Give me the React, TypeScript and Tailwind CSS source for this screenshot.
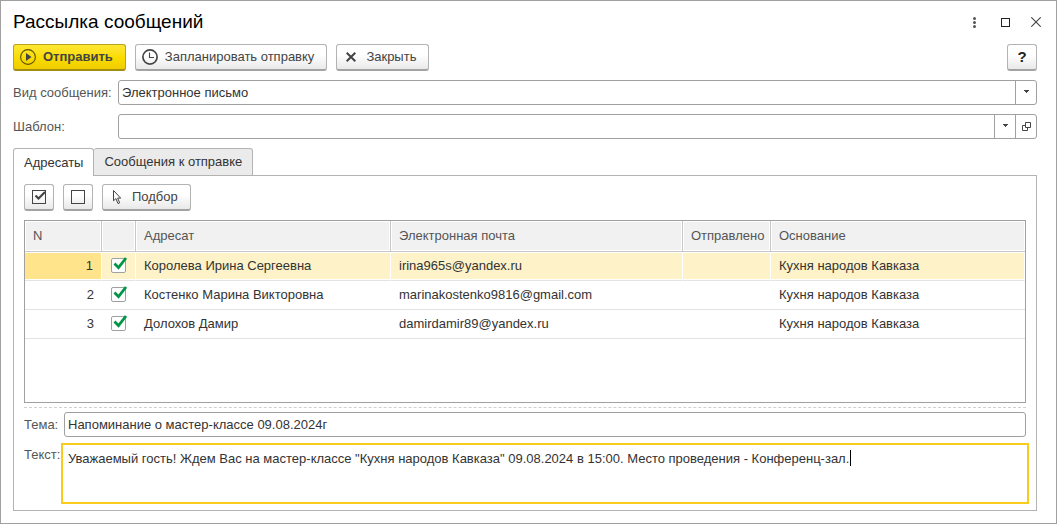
import { useLayoutEffect, useRef, useState } from "react";
import type { ReactNode } from "react";

const recipients = [
  { id: 1, name: "Королева Ирина Сергеевна", email: "irina965s@yandex.ru", reason: "Кухня народов Кавказа" },
  { id: 2, name: "Костенко Марина Викторовна", email: "marinakostenko9816@gmail.com", reason: "Кухня народов Кавказа" },
  { id: 3, name: "Долохов Дамир", email: "damirdamir89@yandex.ru", reason: "Кухня народов Кавказа" },
];

const columns = ["N", "", "Адресат", "Электронная почта", "Отправлено", "Основание"];

const buttonBase =
  "flex h-[27px] items-center rounded-[3px] border border-b-2 border-[#b3b3b3] border-b-[#a3a3a3] bg-linear-to-b from-white from-40% to-[#e9e9e9] text-[#444]";

function ToolButton({ children, label, className }: { children: ReactNode; label?: string; className: string }) {
  return (
    <button type="button" aria-label={label} className={`${buttonBase} ${className}`}>
      {children}
    </button>
  );
}

function PlayIcon() {
  return (
    <svg width="16" height="16" viewBox="0 0 16 16" fill="none">
      <circle cx="8" cy="8" r="7.4" stroke="#5a5000" strokeWidth="1.1" />
      <path d="M6 4v8L11.5 8z" fill="#444" />
    </svg>
  );
}

function ClockIcon() {
  return (
    <svg width="16" height="16" viewBox="0 0 16 16" fill="none" stroke="#444">
      <circle cx="8" cy="8" r="7.1" strokeWidth="1.7" />
      <path d="M7.5 3.5v5H12" strokeWidth="1.1" />
    </svg>
  );
}

function CrossIcon() {
  return (
    <svg width="10" height="10" viewBox="0 0 10 10" stroke="#444" strokeWidth="2">
      <path d="M.7.7l8.6 8.6M9.3.7L.7 9.3" />
    </svg>
  );
}

function CheckAllIcon() {
  return (
    <svg width="16" height="14" viewBox="0 0 16 14" fill="none">
      <rect x="1.5" y=".5" width="13" height="13" stroke="#444" />
      <path d="M4.5 5.5l3 3 6.5-6.5" stroke="#444" strokeWidth="2.2" />
    </svg>
  );
}

function UncheckAllIcon() {
  return (
    <svg width="14" height="14" viewBox="0 0 14 14" fill="none">
      <rect x=".5" y=".5" width="13" height="13" stroke="#444" />
    </svg>
  );
}

function CursorIcon() {
  return (
    <svg width="10" height="16" viewBox="0 0 10 16" fill="none" stroke="#444">
      <path d="M1.5 1.5v10.3l2.4-2.2 2.1 5 1.7-.8-2.1-4.7h3.1z" strokeWidth="1" />
    </svg>
  );
}

function ArrowDown() {
  return (
    <svg width="5" height="3" viewBox="0 0 5 3">
      <path d="M0 0h5v1H4v1H3v1H2V2H1V1H0z" fill="#444" />
    </svg>
  );
}

function OpenIcon() {
  return (
    <svg width="9" height="9" viewBox="0 0 9 9" fill="none" stroke="#444">
      <path d="M3.5.5h5v5h-5zM3.5 3.5h-3v5h5v-3" />
    </svg>
  );
}

function SelectBox({ id, options }: { id: string; options: string[] }) {
  return (
    <div className="relative min-w-0 flex-1">
      <select id={id} className="block h-full w-full appearance-none bg-transparent pr-6 pl-[3px] text-[#333] outline-none">
        {options.map((option) => (
          <option key={option}>{option}</option>
        ))}
      </select>
      <span className="pointer-events-none absolute inset-y-0 right-0 flex w-[21px] items-center justify-center border-l border-[#a0a0a0] pb-[2px]">
        <ArrowDown />
      </span>
    </div>
  );
}

function RowCheck({ label }: { label: string }) {
  return (
    <span className="relative mb-[2px] ml-[9px] block size-[15px]">
      <input
        type="checkbox"
        defaultChecked
        aria-label={label}
        className="peer block size-[15px] appearance-none rounded-[2px] border border-[#a0a0a0] bg-white"
      />
      <svg
        className="pointer-events-none invisible absolute -top-px left-[2px] peer-checked:visible"
        width="15"
        height="14"
        viewBox="0 0 15 14"
        fill="none"
      >
        <path d="M1.5 6.5l4 4.2L13 1" stroke="#009646" strokeWidth="2.8" />
      </svg>
    </span>
  );
}

function MessageBox({ id }: { id: string }) {
  const [text, setText] = useState(
    'Уважаемый гость! Ждем Вас на мастер-классе "Кухня народов Кавказа" 09.08.2024 в 15:00. Место проведения - Конференц-зал.'
  );
  const area = useRef<HTMLTextAreaElement>(null);
  const [caret, setCaret] = useState(0);

  useLayoutEffect(() => {
    const context = document.createElement("canvas").getContext("2d");
    if (!area.current || !context) return;
    const style = getComputedStyle(area.current);
    context.font = `${style.fontSize} ${style.fontFamily}`;
    setCaret(Math.ceil(context.measureText(text).width) + 5);
  }, [text]);

  return (
    <div className="relative -mr-[3px] -ml-[3px] min-w-0 flex-1 border-2 border-[#f8cb1c] bg-white">
      <textarea
        id={id}
        ref={area}
        value={text}
        onChange={(event) => setText(event.target.value)}
        className="block h-[57px] w-full resize-none px-[5px] py-[6px] leading-4 text-[#333] caret-transparent outline-none"
      />
      <span className="pointer-events-none absolute top-[5px] h-4 w-px bg-black" style={{ left: caret }} />
    </div>
  );
}

export default function App() {
  return (
    <div className="flex min-h-screen flex-col border border-[#a0a0a0] bg-white px-3 pb-3 font-['Liberation_Sans',Arial,sans-serif] text-[13px] leading-4 text-[#333]">
      <header className="flex h-[42px] items-center justify-between pr-[7px]">
        <h1 className="text-[19px] leading-5 text-black">Рассылка сообщений</h1>
        <div className="flex items-center gap-[21px]">
          <button type="button" aria-label="Меню" className="flex h-4 w-3 items-center justify-center">
            <svg width="3" height="11" viewBox="0 0 3 11" fill="#555">
              <circle cx="1.5" cy="1.5" r="1.5" />
              <circle cx="1.5" cy="5.5" r="1.5" />
              <circle cx="1.5" cy="9.5" r="1.5" />
            </svg>
          </button>
          <button type="button" aria-label="Развернуть">
            <svg width="9" height="9" viewBox="0 0 9 9" fill="none" stroke="#222">
              <rect x=".5" y=".5" width="8" height="8" />
            </svg>
          </button>
          <button type="button" aria-label="Закрыть окно" className="-mr-1">
            <svg width="10" height="10" viewBox="0 0 10 10" stroke="#444" strokeWidth="1.1">
              <path d="M.3.3l9.4 9.4M9.7.3L.3 9.7" />
            </svg>
          </button>
        </div>
      </header>

      <div className="mt-px flex items-center gap-[9px] pr-[7px]">
        <button
          type="button"
          className="flex h-[27px] items-center gap-[7px] rounded-[3px] border border-b-2 border-[#b9a21c] border-b-[#a38d0c] bg-linear-to-b from-[#ffe731] via-[#fbdc00] to-[#efcd00] pr-3 pl-[6px] font-bold text-[#444]"
        >
          <PlayIcon />
          Отправить
        </button>
        <ToolButton className="gap-[7px] pr-3 pl-[6px]">
          <ClockIcon />
          Запланировать отправку
        </ToolButton>
        <ToolButton className="gap-[10px] pr-3 pl-[9px]">
          <CrossIcon />
          Закрыть
        </ToolButton>
        <button
          type="button"
          aria-label="Справка"
          className="ml-auto flex h-[27px] w-[30px] items-center justify-center rounded-[3px] border border-b-2 border-[#b3b3b3] border-b-[#a3a3a3] bg-linear-to-b from-white from-40% to-[#e9e9e9] text-[15px] font-bold text-[#222]"
        >
          ?
        </button>
      </div>

      <div className="mt-[9px] flex flex-col gap-[9px] pr-[7px]">
        <div className="flex items-center">
          <label htmlFor="kind" className="w-[105px] shrink-0 text-[#555]">
            Вид сообщения:
          </label>
          <div className="flex h-[25px] min-w-0 flex-1 rounded-[3px] border border-[#a0a0a0]">
            <SelectBox id="kind" options={["Электронное письмо", "SMS"]} />
          </div>
        </div>
        <div className="flex items-center">
          <label htmlFor="template" className="w-[105px] shrink-0 text-[#555]">
            Шаблон:
          </label>
          <div className="flex h-[25px] min-w-0 flex-1 rounded-[3px] border border-[#a0a0a0]">
            <SelectBox id="template" options={[""]} />
            <button
              type="button"
              aria-label="Открыть"
              className="flex w-[21px] items-center justify-center border-l border-[#a0a0a0] pb-px"
            >
              <OpenIcon />
            </button>
          </div>
        </div>
      </div>

      <div className="mt-[9px] mr-[7px] flex flex-1 flex-col">
        <div role="tablist" className="z-10 -mb-px flex">
          <button
            type="button"
            role="tab"
            aria-selected="true"
            className="h-7 rounded-t-[3px] border border-b-0 border-[#b3b3b3] bg-white px-[10px]"
          >
            Адресаты
          </button>
          <button
            type="button"
            role="tab"
            aria-selected="false"
            className="h-7 rounded-t-[3px] border border-l-0 border-[#b3b3b3] bg-[#ebebeb] px-[10px]"
          >
            Сообщения к отправке
          </button>
        </div>

        <div role="tabpanel" className="flex flex-1 flex-col border border-[#b3b3b3] px-[10px] pt-2 pb-[6px]">
          <div className="flex gap-[9px]">
            <ToolButton label="Отметить все" className="w-[30px] justify-center">
              <CheckAllIcon />
            </ToolButton>
            <ToolButton label="Снять отметки" className="w-[30px] justify-center">
              <UncheckAllIcon />
            </ToolButton>
            <ToolButton className="gap-[10px] pr-3 pl-[9px]">
              <CursorIcon />
              Подбор
            </ToolButton>
          </div>

          <div className="mt-[9px] flex-1 border border-[#a0a0a0]">
            <table className="w-full table-fixed border-separate border-spacing-0">
              <colgroup>
                <col className="w-[77px]" />
                <col className="w-[34px]" />
                <col className="w-[255px]" />
                <col className="w-[292px]" />
                <col className="w-[88px]" />
                <col />
              </colgroup>
              <thead>
                <tr>
                  {columns.map((column, index) => (
                    <th
                      key={index}
                      scope="col"
                      className="h-[31px] border-r border-b border-[#c8c8c8] bg-[#f1f1f1] px-2 text-left font-normal whitespace-nowrap text-[#555] inset-ring inset-ring-white last:border-r-0"
                    >
                      {column}
                    </th>
                  ))}
                </tr>
              </thead>
              <tbody>
                {recipients.map((row) => (
                  <tr
                    key={row.id}
                    className="group *:h-[29px] *:border-b *:border-[#e3e3e3] first:*:border-r first:*:border-r-white first:*:bg-[#fdf2c8] first:*:shadow-[inset_0_1px_white,inset_0_-1px_white] last:*:border-r-0"
                  >
                    <td className="pr-2 text-right group-first:bg-[#ffe48c]!">{row.id}</td>
                    <td>
                      <RowCheck label={row.name} />
                    </td>
                    <td className="px-2">{row.name}</td>
                    <td className="px-2">{row.email}</td>
                    <td />
                    <td className="px-2">{row.reason}</td>
                  </tr>
                ))}
              </tbody>
            </table>
          </div>

          <div className="mt-1 border-t border-dashed border-[#d0d0d0]" />

          <div className="mt-1 flex items-center">
            <label htmlFor="subject" className="w-10 shrink-0 text-[#555]">
              Тема:
            </label>
            <input
              id="subject"
              type="text"
              defaultValue="Напоминание о мастер-классе 09.08.2024г"
              className="h-[25px] min-w-0 flex-1 rounded-[3px] border border-[#a0a0a0] px-[3px] text-[#333] outline-none"
            />
          </div>
          <div className="mt-[6px] flex">
            <label htmlFor="message" className="mt-1 w-10 shrink-0 text-[#555]">
              Текст:
            </label>
            <MessageBox id="message" />
          </div>
        </div>
      </div>
    </div>
  );
}
